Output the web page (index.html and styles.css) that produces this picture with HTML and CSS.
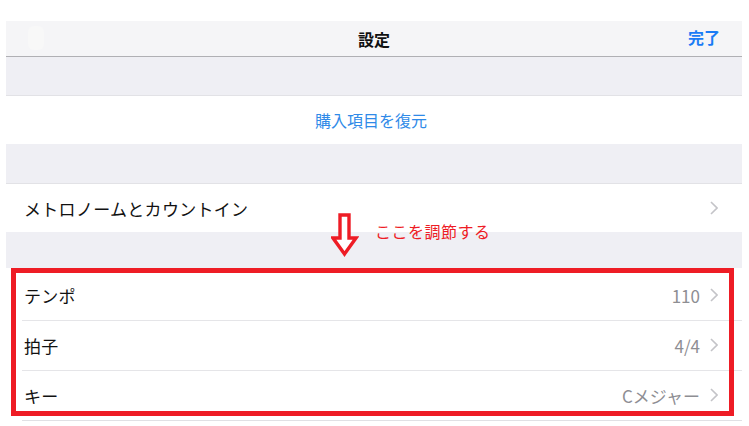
FILE: index.html
```html
<!DOCTYPE html>
<html lang="ja">
<head>
<meta charset="utf-8">
<link rel="stylesheet" href="styles.css">
</head>
<body>
<div class="screen">
  <header class="nav">
    <span class="nav-ghost"></span>
    <h1 class="nav-title">設定</h1>
    <span class="nav-done">完了</span>
  </header>
  <div class="gap gap-first"></div>
  <div class="group">
    <div class="row row-center"><span class="link">購入項目を復元</span></div>
  </div>
  <div class="gap"></div>
  <div class="group">
    <div class="row">
      <span class="label">メトロノームとカウントイン</span>
      <span class="value"><svg class="chev" viewBox="0 0 8 14"><path d="M1 1l6 6-6 6"/></svg></span>
    </div>
  </div>
  <div class="gap gap-note">
    <div class="note">
      <svg class="arrow" viewBox="0 0 28 44"><path d="M9 2h9v23h7L13.5 41 2 25h7z"/></svg>
      <span class="note-text">ここを調節する</span>
    </div>
  </div>
  <div class="group group-marked">
    <div class="row row-first">
      <span class="label">テンポ</span>
      <span class="value">110<svg class="chev" viewBox="0 0 8 14"><path d="M1 1l6 6-6 6"/></svg></span>
    </div>
    <div class="row">
      <span class="label">拍子</span>
      <span class="value">4/4<svg class="chev" viewBox="0 0 8 14"><path d="M1 1l6 6-6 6"/></svg></span>
    </div>
    <div class="row">
      <span class="label">キー</span>
      <span class="value">Cメジャー<svg class="chev" viewBox="0 0 8 14"><path d="M1 1l6 6-6 6"/></svg></span>
    </div>
    <div class="mark"></div>
  </div>
</div>
</body>
</html>
```
FILE: styles.css
```css
* { box-sizing: border-box; }
html, body { margin: 0; padding: 0; background: #fff; }
body {
  font-family: "Noto Sans CJK JP", "Noto Sans", sans-serif;
  color: #111;
}
.screen {
  margin: 21px 7px 0 6px;
  width: 736px;
}
.nav {
  height: 36px;
  background: #f5f5f7;
  border-bottom: 1px solid #b0b0b4;
  display: flex;
  align-items: center;
  justify-content: center;
  position: relative;
}
.nav-ghost {
  position: absolute;
  left: 22px;
  top: 5px;
  width: 16px;
  height: 24px;
  border-radius: 6px;
  background: #f8f8f8;
}
.nav-title {
  margin: 0;
  font-size: 16px;
  font-weight: 700;
  line-height: 1;
}
.nav-done {
  position: absolute;
  right: 22px;
  top: 7px;
  font-size: 16px;
  font-weight: 700;
  color: #1a7cf5;
  line-height: 1.2;
}
.gap {
  background: #efeff4;
  height: 40px;
  border-bottom: 1px solid #e2e2e6;
}
.gap-first { height: 39px; }
.gap-note { height: 36px; position: relative; border-bottom: none; }
.group { background: #fff; }
.row {
  height: 48px;
  display: flex;
  align-items: center;
  justify-content: space-between;
  padding: 0 24px 0 18px;
  font-size: 17px;
  position: relative;
}
.row-center { justify-content: center; }
.link { color: #2f8ae8; font-size: 16px; }
.label { color: #111; letter-spacing: 0.3px; }
.value {
  display: flex;
  align-items: center;
  gap: 10px;
  color: #8e8e93;
  font-size: 17px;
}
.chev {
  width: 8px;
  height: 14px;
  fill: none;
  stroke: #c4c4c8;
  stroke-width: 1.6;
}
.group-marked { position: relative; }
.group-marked .row { height: 50px; }
.group-marked .row-first { height: 52px; padding-top: 2px; }
.group-marked .row + .row::before {
  content: "";
  position: absolute;
  left: 16px;
  right: 0;
  top: 0;
  border-top: 1px solid #e5e5e8;
}
.group-marked::after {
  content: "";
  display: block;
  margin-left: 16px;
  border-top: 1px solid #e0e0e4;
}
.mark {
  position: absolute;
  left: 5px;
  top: 0;
  width: 723px;
  height: 148px;
  border: 5px solid #ee1c25;
}
.note {
  position: absolute;
  left: 325px;
  top: -19px;
  display: flex;
  align-items: flex-start;
  gap: 16px;
}
.arrow {
  width: 28px;
  height: 44px;
  fill: #fff;
  stroke: #ee1c25;
  stroke-width: 3.4;
  stroke-linejoin: miter;
}
.note-text {
  margin-top: 6px;
  color: #ee1c25;
  font-size: 16px;
  letter-spacing: 0.5px;
}
```
